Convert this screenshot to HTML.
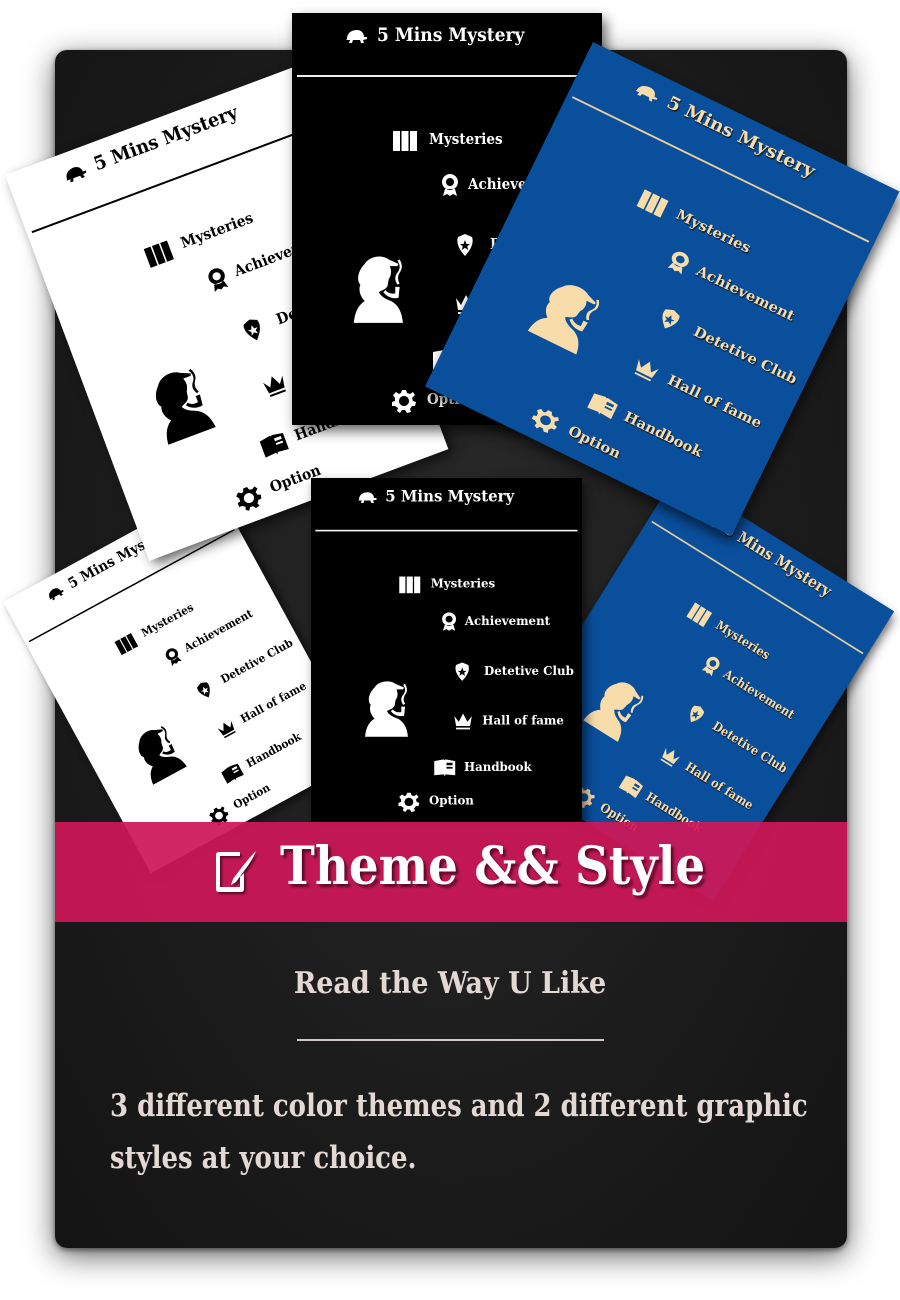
<!DOCTYPE html>
<html><head><meta charset="utf-8">
<style>
*{margin:0;padding:0;box-sizing:border-box}
body{width:900px;height:1300px;background:#fff;position:relative;overflow:hidden;font-family:"DejaVu Serif","Liberation Serif",serif}
.panel{position:absolute;left:55px;top:50px;width:792px;height:1198px;border-radius:12px;background:radial-gradient(ellipse at 50% 45%,#2a2a2a 0%,#1c1c1c 55%,#141414 100%);box-shadow:0 8px 30px rgba(0,0,0,.6),0 2px 6px rgba(0,0,0,.5)}
.clip{position:absolute;left:0;top:0;width:900px;height:922px;overflow:hidden}
.card{position:absolute;width:310px;height:412px;transform-origin:0 0;font-weight:bold;font-family:"DejaVu Serif Condensed","DejaVu Serif",serif;box-shadow:4px 6px 12px rgba(0,0,0,.6);overflow:hidden}
.card .t{position:absolute;white-space:nowrap}
.card .ttl{left:85px;top:11px;font-size:19px}
.card .ln{position:absolute;left:5px;right:5px;top:62px;height:2px}
.card .it{font-size:15px}
.card svg{position:absolute}
.w{background:#fff;color:#000}.w .ln{background:#000}.w svg{fill:#000}
.b{background:#000;color:#fff}.b .ln{background:#eee}.b svg{fill:#fff}
.u{background:#0a4f9c;color:#f8dcaa;text-shadow:1px 1px 1px #111}.u .ln{background:#e8cfa0;height:1.5px}.u svg{fill:#f8dcaa}
.banner{position:absolute;left:55px;top:822px;width:792px;height:100px;background:rgba(206,24,88,.93)}
.bt{position:absolute;left:280px;top:836px;color:#fff;font-family:"DejaVu Serif",serif;font-weight:bold;font-size:52px;white-space:nowrap;text-shadow:3px 3px 3px #5a0a25;transform-origin:0 0;transform:scaleX(.9)}
.sub{position:absolute;left:0;width:900px;top:966px;text-align:center;color:#e4d8d4;font-weight:bold;font-size:30px;font-family:"DejaVu Serif Condensed","DejaVu Serif",serif}
.hr{position:absolute;left:297px;width:307px;top:1039px;height:2px;background:#cfc8c6}
.body{position:absolute;left:110px;top:1080px;color:#e4d8d4;font-weight:bold;font-size:31px;line-height:52px;font-family:"DejaVu Serif Condensed","DejaVu Serif",serif;white-space:nowrap;transform-origin:0 0;transform:scaleX(.93)}
</style></head><body>
<div class="panel"></div>

<svg width="0" height="0" style="position:absolute">
<defs>
<symbol id="tur" viewBox="0 0 24 14"><path d="M3 10 C3 3 9 1 13 1 C17 1 20 4 20 8 L23 8 L23 10 L19 11 L20 14 L17 14 L16 11 L9 11 L8 14 L5 14 L6 11 L2 11 Z"/></symbol>
<symbol id="sil" viewBox="0 0 60 66"><path d="M16 10 C20 3 32 1 38 6 L47 10 L46 12 L39 12 C41 17 40 21 38 24 L37 30 C35 34 31 34 29 36 C31 40 35 42 40 44 C46 47 50 53 51 64 L6 64 C7 54 10 48 16 44 C12 40 10 34 12 29 C8 25 10 16 16 10 Z"/><path d="M33 36 Q39 43 47 41 L48 31 L44 31 L44 37 Q38 38 35 34 Z"/><path d="M46 29 Q42 23 46 18 Q50 13 46 7 L48 6 Q52 13 48 18 Q45 23 48 28 Z"/></symbol>
<symbol id="bk" viewBox="0 0 26 24"><rect x="1" y="3" width="7" height="20"/><rect x="9.5" y="3" width="7" height="20"/><rect x="18" y="3" width="7" height="20"/></symbol>
<symbol id="md" viewBox="0 0 20 24"><path d="M10 1 A8 8 0 1 1 9.99 1 Z M10 5 A4 4 0 1 0 10.01 5 Z M5 16 L3 23 L7 21 L10 23 L13 21 L17 23 L15 16 Z" fill-rule="evenodd"/></symbol>
<symbol id="bd" viewBox="0 0 22 24"><path d="M4 4 L11 1 L18 4 Q21 12 11 23 Q1 12 4 4 Z M11 7 L12.5 11 L16 11 L13.2 13.2 L14.3 17 L11 14.7 L7.7 17 L8.8 13.2 L6 11 L9.5 11 Z" fill-rule="evenodd"/></symbol>
<symbol id="cr" viewBox="0 0 24 22"><path d="M2 5 L7 12 L12 2 L17 12 L22 5 L20 17 L4 17 Z M4 19 L20 19 L20 21 L4 21 Z"/></symbol>
<symbol id="hb" viewBox="0 0 26 22"><path d="M1 3 L12 1 L13 2 L14 1 L25 3 L25 20 L14 19 L13 21 L12 19 L1 20 Z M15 5 L15 8 L22 8 L22 5 Z M15 10 L15 12 L22 12 L22 10 Z" fill-rule="evenodd"/></symbol>
<symbol id="gr" viewBox="0 0 24 24"><path d="M10 1 L14 1 L15 4 L18 5 L21 3 L23 6 L20 9 L21 12 L24 13 L23 17 L20 17 L18 20 L19 23 L15 24 L13 21 L10 21 L8 24 L5 22 L6 19 L3 17 L0 17 L0 13 L3 12 L3 9 L1 6 L4 3 L7 5 L9 4 Z M12 7 A5 5 0 1 0 12.01 7 Z" fill-rule="evenodd"/></symbol>
<symbol id="ed" viewBox="0 0 44 46"><path d="M2 6 Q2 3 5 3 L26 3 L26 7 L6 7 L6 38 L26 38 L26 28 L30 24 L30 40 Q30 43 27 43 L5 43 Q2 43 2 40 Z"/><path d="M42 2 Q38 12 30 22 L22 33 L17 36 L19 30 L28 18 Q36 8 42 2 Z"/></symbol>
</defs></svg>

<div class="clip">
<div class="card w" style="transform:translate(3px,602px) rotate(-28.6deg) scale(.78,.75)">
<svg style="left:52px;top:16px" width="24" height="14"><use href="#tur"/></svg><span class="t ttl">5 Mins Mystery</span><div class="ln"></div>
<svg style="left:100px;top:115px" width="26" height="24"><use href="#bk"/></svg><span class="t it" style="left:137px;top:117px">Mysteries</span>
<svg style="left:148px;top:160px" width="20" height="24"><use href="#md"/></svg><span class="t it" style="left:176px;top:162px">Achievement</span>
<svg style="left:162px;top:220px" width="22" height="24"><use href="#bd"/></svg><span class="t it" style="left:198px;top:222px">Detetive Club</span>
<svg style="left:162px;top:280px" width="24" height="22"><use href="#cr"/></svg><span class="t it" style="left:196px;top:281px">Hall of fame</span>
<svg style="left:140px;top:336px" width="26" height="22"><use href="#hb"/></svg><span class="t it" style="left:175px;top:337px">Handbook</span>
<svg style="left:100px;top:376px" width="24" height="24"><use href="#gr"/></svg><span class="t it" style="left:135px;top:377px">Option</span>
<svg style="left:50px;top:240px" width="66" height="72"><use href="#sil"/></svg>
</div>
<div class="card w" style="transform:translate(5px,175px) rotate(-20.5deg) scale(1.03,1)">
<svg style="left:52px;top:16px" width="24" height="14"><use href="#tur"/></svg><span class="t ttl">5 Mins Mystery</span><div class="ln"></div>
<svg style="left:100px;top:115px" width="26" height="24"><use href="#bk"/></svg><span class="t it" style="left:137px;top:117px">Mysteries</span>
<svg style="left:148px;top:160px" width="20" height="24"><use href="#md"/></svg><span class="t it" style="left:176px;top:162px">Achievement</span>
<svg style="left:162px;top:220px" width="22" height="24"><use href="#bd"/></svg><span class="t it" style="left:198px;top:222px">Detetive Club</span>
<svg style="left:162px;top:280px" width="24" height="22"><use href="#cr"/></svg><span class="t it" style="left:196px;top:281px">Hall of fame</span>
<svg style="left:140px;top:336px" width="26" height="22"><use href="#hb"/></svg><span class="t it" style="left:175px;top:337px">Handbook</span>
<svg style="left:100px;top:376px" width="24" height="24"><use href="#gr"/></svg><span class="t it" style="left:135px;top:377px">Option</span>
<svg style="left:50px;top:240px" width="66" height="72"><use href="#sil"/></svg>
</div>
<div class="card b" style="transform:translate(292px,13px)">
<svg style="left:52px;top:16px" width="24" height="14"><use href="#tur"/></svg><span class="t ttl">5 Mins Mystery</span><div class="ln"></div>
<svg style="left:100px;top:115px" width="26" height="24"><use href="#bk"/></svg><span class="t it" style="left:137px;top:117px">Mysteries</span>
<svg style="left:148px;top:160px" width="20" height="24"><use href="#md"/></svg><span class="t it" style="left:176px;top:162px">Achievement</span>
<svg style="left:162px;top:220px" width="22" height="24"><use href="#bd"/></svg><span class="t it" style="left:198px;top:222px">Detetive Club</span>
<svg style="left:162px;top:280px" width="24" height="22"><use href="#cr"/></svg><span class="t it" style="left:196px;top:281px">Hall of fame</span>
<svg style="left:140px;top:336px" width="26" height="22"><use href="#hb"/></svg><span class="t it" style="left:175px;top:337px">Handbook</span>
<svg style="left:100px;top:376px" width="24" height="24"><use href="#gr"/></svg><span class="t it" style="left:135px;top:377px">Option</span>
<svg style="left:55px;top:240px" width="66" height="72"><use href="#sil"/></svg>
</div>
<div class="card u" style="transform:translate(676px,475px) rotate(32deg) scale(.83)">
<svg style="left:52px;top:16px" width="24" height="14"><use href="#tur"/></svg><span class="t ttl">5 Mins Mystery</span><div class="ln"></div>
<svg style="left:100px;top:115px" width="26" height="24"><use href="#bk"/></svg><span class="t it" style="left:137px;top:117px">Mysteries</span>
<svg style="left:148px;top:160px" width="20" height="24"><use href="#md"/></svg><span class="t it" style="left:176px;top:162px">Achievement</span>
<svg style="left:162px;top:220px" width="22" height="24"><use href="#bd"/></svg><span class="t it" style="left:198px;top:222px">Detetive Club</span>
<svg style="left:162px;top:280px" width="24" height="22"><use href="#cr"/></svg><span class="t it" style="left:196px;top:281px">Hall of fame</span>
<svg style="left:140px;top:336px" width="26" height="22"><use href="#hb"/></svg><span class="t it" style="left:175px;top:337px">Handbook</span>
<svg style="left:100px;top:376px" width="24" height="24"><use href="#gr"/></svg><span class="t it" style="left:135px;top:377px">Option</span>
<svg style="left:55px;top:240px" width="66" height="72"><use href="#sil"/></svg>
</div>
<div class="card u" style="transform:translate(593px,42px) rotate(26deg) scale(1.1,.93)">
<svg style="left:52px;top:16px" width="24" height="14"><use href="#tur"/></svg><span class="t ttl">5 Mins Mystery</span><div class="ln"></div>
<svg style="left:100px;top:115px" width="26" height="24"><use href="#bk"/></svg><span class="t it" style="left:137px;top:117px">Mysteries</span>
<svg style="left:148px;top:160px" width="20" height="24"><use href="#md"/></svg><span class="t it" style="left:176px;top:162px">Achievement</span>
<svg style="left:162px;top:220px" width="22" height="24"><use href="#bd"/></svg><span class="t it" style="left:198px;top:222px">Detetive Club</span>
<svg style="left:162px;top:280px" width="24" height="22"><use href="#cr"/></svg><span class="t it" style="left:196px;top:281px">Hall of fame</span>
<svg style="left:140px;top:336px" width="26" height="22"><use href="#hb"/></svg><span class="t it" style="left:175px;top:337px">Handbook</span>
<svg style="left:100px;top:376px" width="24" height="24"><use href="#gr"/></svg><span class="t it" style="left:135px;top:377px">Option</span>
<svg style="left:55px;top:240px" width="66" height="72"><use href="#sil"/></svg>
</div>
<div class="card b" style="transform:translate(311px,478px) scale(.874,.835)">
<svg style="left:52px;top:16px" width="24" height="14"><use href="#tur"/></svg><span class="t ttl">5 Mins Mystery</span><div class="ln"></div>
<svg style="left:100px;top:115px" width="26" height="24"><use href="#bk"/></svg><span class="t it" style="left:137px;top:117px">Mysteries</span>
<svg style="left:148px;top:160px" width="20" height="24"><use href="#md"/></svg><span class="t it" style="left:176px;top:162px">Achievement</span>
<svg style="left:162px;top:220px" width="22" height="24"><use href="#bd"/></svg><span class="t it" style="left:198px;top:222px">Detetive Club</span>
<svg style="left:162px;top:280px" width="24" height="22"><use href="#cr"/></svg><span class="t it" style="left:196px;top:281px">Hall of fame</span>
<svg style="left:140px;top:336px" width="26" height="22"><use href="#hb"/></svg><span class="t it" style="left:175px;top:337px">Handbook</span>
<svg style="left:100px;top:376px" width="24" height="24"><use href="#gr"/></svg><span class="t it" style="left:135px;top:377px">Option</span>
<svg style="left:55px;top:240px" width="66" height="72"><use href="#sil"/></svg>
</div>
</div>

<div class="banner"></div>
<svg style="position:absolute;left:214px;top:849px;filter:drop-shadow(2px 2px 1px #5a0a25)" width="44" height="46" fill="#fff"><use href="#ed"/></svg>
<div class="bt">Theme &amp;&amp; Style</div>
<div class="sub">Read the Way U Like</div>
<div class="hr"></div>
<div class="body">3 different color themes and 2 different graphic<br>styles at your choice.</div>
</body></html>
